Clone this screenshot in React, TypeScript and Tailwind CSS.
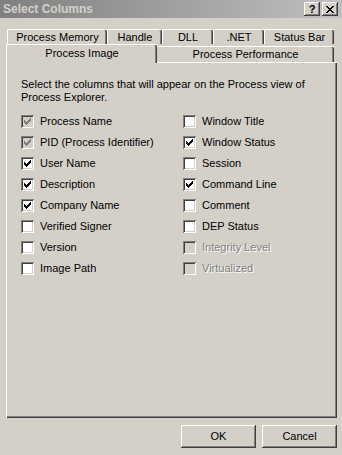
import React from "react";

const raised =
  "shadow-[inset_-1px_-1px_#404040,inset_1px_1px_#ffffff,inset_-2px_-2px_#808080,inset_2px_2px_#d4d0c8]";

const backTabs = [
  { label: "Process Memory", w: "w-[100px]" },
  { label: "Handle", w: "w-[55px]" },
  { label: "DLL", w: "w-[51px]" },
  { label: ".NET", w: "w-[51px]" },
  { label: "Status Bar", w: "w-[70px]" },
];

type Col = { label: string; checked: boolean; boxDisabled?: boolean; disabled?: boolean };

const leftCols: Col[] = [
  { label: "Process Name", checked: true, boxDisabled: true },
  { label: "PID (Process Identifier)", checked: true, boxDisabled: true },
  { label: "User Name", checked: true },
  { label: "Description", checked: true },
  { label: "Company Name", checked: true },
  { label: "Verified Signer", checked: false },
  { label: "Version", checked: false },
  { label: "Image Path", checked: false },
];

const rightCols: Col[] = [
  { label: "Window Title", checked: false },
  { label: "Window Status", checked: true },
  { label: "Session", checked: false },
  { label: "Command Line", checked: true },
  { label: "Comment", checked: false },
  { label: "DEP Status", checked: false },
  { label: "Integrity Level", checked: false, disabled: true },
  { label: "Virtualized", checked: false, disabled: true },
];

// 7x7 classic check glyph
const checkPixels = [
  "......X",
  ".....XX",
  "X...XXX",
  "XX.XXX.",
  "XXXXX..",
  ".XXX...",
  "..X....",
];

function CheckMark({ color }: { color: string }) {
  return (
    <svg width="7" height="7" viewBox="0 0 7 7" shapeRendering="crispEdges">
      {checkPixels.map((row, y) =>
        row.split("").map((c, x) =>
          c === "X" ? <rect key={`${x}-${y}`} x={x} y={y} width="1" height="1" fill={color} /> : null
        )
      )}
    </svg>
  );
}

function CheckRow({ col }: { col: Col }) {
  const grey = col.boxDisabled || col.disabled;
  return (
    <div className="flex h-[21px] items-center">
      <div
        className={`flex h-[13px] w-[13px] items-center justify-center shadow-[inset_1px_1px_#808080,inset_-1px_-1px_#ffffff,inset_2px_2px_#404040,inset_-2px_-2px_#d4d0c8] ${
          grey ? "bg-[#d4d0c8]" : "bg-white"
        }`}
      >
        {col.checked && <CheckMark color={grey ? "#808080" : "#000000"} />}
      </div>
      <span
        className={`ml-[6px] whitespace-nowrap ${
          col.disabled ? "text-[#808080] [text-shadow:1px_1px_0_#ffffff]" : "text-black"
        }`}
      >
        {col.label}
      </span>
    </div>
  );
}

export default function App() {
  return (
    <div className="flex h-[455px] w-[342px] flex-col bg-[#d4d0c8] font-['Liberation_Sans',Arial,sans-serif] text-[11px] leading-[13px] text-black">
      {/* title bar */}
      <div className="flex h-[18px] items-center bg-gradient-to-r from-[#808080] to-[#c0c0c0] pl-[3px] pr-[4px]">
        <span className="flex-1 text-[12px] font-bold text-[#d4d0c8]">Select Columns</span>
        <div className="flex gap-[2px]">
          <div className={`flex h-[14px] w-[16px] items-center justify-center bg-[#d4d0c8] text-[11px] font-bold ${raised}`}>
            ?
          </div>
          <div className={`flex h-[14px] w-[16px] items-center justify-center bg-[#d4d0c8] ${raised}`}>
            <svg width="8" height="7" viewBox="0 0 8 7" shapeRendering="crispEdges">
              <path d="M0 0h2v1h-2zM6 0h2v1h-2zM1 1h2v1h-2zM5 1h2v1h-2zM2 2h4v1h-4zM3 3h2v1h-2zM2 4h4v1h-4zM1 5h2v1h-2zM5 5h2v1h-2zM0 6h2v1h-2zM6 6h2v1h-2z" fill="#000" />
            </svg>
          </div>
        </div>
      </div>

      {/* tabs */}
      <div className="mt-[11px] flex h-[15px] pl-[7px]">
        {backTabs.map((t) => (
          <div
            key={t.label}
            className={`${t.w} flex items-center justify-center rounded-tl-[2px] rounded-tr-[2px] border-l border-t border-white shadow-[inset_-1px_0_#404040,inset_-2px_0_#808080]`}
          >
            {t.label}
          </div>
        ))}
      </div>
      <div className="flex h-[18px] items-end pl-[6px]">
        <div className="relative z-10 -mb-[1px] flex h-[19px] w-[151px] items-start justify-center rounded-tl-[2px] rounded-tr-[2px] border-l border-t border-white bg-[#d4d0c8] pt-[2px] shadow-[inset_-1px_0_#404040,inset_-2px_0_#808080]">
          Process Image
        </div>
        <div className="flex h-[16px] w-[177px] items-center justify-center rounded-tr-[2px] border-t border-white shadow-[inset_-1px_0_#404040,inset_-2px_0_#808080]">
          Process Performance
        </div>
      </div>

      {/* panel */}
      <div className="ml-[6px] h-[356px] w-[331px] border-l border-t border-white pl-[14px] pt-[15px] shadow-[inset_-1px_-1px_#404040,inset_-2px_-2px_#808080]">
        <p className="w-[290px]">
          Select the columns that will appear on the Process view of Process Explorer.
        </p>
        <div className="mt-[7px] flex">
          <div className="flex w-[162px] flex-col">
            {leftCols.map((c) => (
              <CheckRow key={c.label} col={c} />
            ))}
          </div>
          <div className="flex flex-col">
            {rightCols.map((c) => (
              <CheckRow key={c.label} col={c} />
            ))}
          </div>
        </div>
      </div>

      {/* buttons */}
      <div className="mt-[7px] flex justify-end gap-[6px] pr-[5px]">
        <button className={`h-[23px] w-[75px] bg-[#d4d0c8] text-[11px] ${raised}`}>OK</button>
        <button className={`h-[23px] w-[75px] bg-[#d4d0c8] text-[11px] ${raised}`}>Cancel</button>
      </div>
    </div>
  );
}
